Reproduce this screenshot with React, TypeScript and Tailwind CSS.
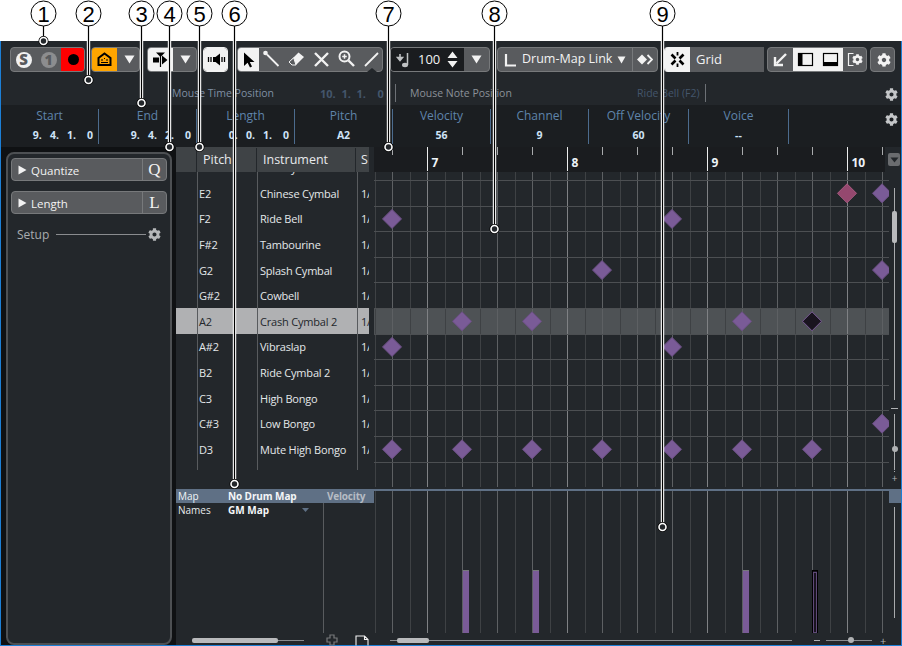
import React from 'react';
import { FaCog } from 'react-icons/fa';

const rowH = 25.6;
const gridW = 515;
const rows = [
  { pitch: 'D#2', name: 'Ride Cymbal 1' },
  { pitch: 'E2', name: 'Chinese Cymbal' },
  { pitch: 'F2', name: 'Ride Bell' },
  { pitch: 'F#2', name: 'Tambourine' },
  { pitch: 'G2', name: 'Splash Cymbal' },
  { pitch: 'G#2', name: 'Cowbell' },
  { pitch: 'A2', name: 'Crash Cymbal 2', active: true },
  { pitch: 'A#2', name: 'Vibraslap' },
  { pitch: 'B2', name: 'Ride Cymbal 2' },
  { pitch: 'C3', name: 'High Bongo' },
  { pitch: 'C#3', name: 'Low Bongo' },
  { pitch: 'D3', name: 'Mute High Bongo' },
];

// note centres, in page x, by row index below the E2 row
const notes: { row: number; x: number; kind?: 'pink' | 'sel' }[] = [
  { row: 0, x: 847, kind: 'pink' },
  { row: 0, x: 882 },
  { row: 1, x: 392 },
  { row: 1, x: 672 },
  { row: 3, x: 602 },
  { row: 3, x: 882 },
  { row: 5, x: 462 },
  { row: 5, x: 532 },
  { row: 5, x: 742 },
  { row: 5, x: 812, kind: 'sel' },
  { row: 6, x: 392 },
  { row: 6, x: 672 },
  { row: 9, x: 882 },
  { row: 10, x: 392 },
  { row: 10, x: 462 },
  { row: 10, x: 532 },
  { row: 10, x: 602 },
  { row: 10, x: 672 },
  { row: 10, x: 742 },
  { row: 10, x: 812 },
];

const subLines = Array.from({ length: 15 }, (_, i) => 375 + i * 35 - 374 + 0.5);
const beatLines = Array.from({ length: 15 }, (_, i) => 392 + i * 35 - 374 + 0.5);
const barLines = [427, 567, 707, 847].map(x => x - 374 + 0.5);

const callouts = [
  { n: 1, x: 43, endX: 43, endY: 41 },
  { n: 2, x: 88, endX: 88, endY: 80 },
  { n: 3, x: 141, endX: 141, endY: 103 },
  { n: 4, x: 169, endX: 169, endY: 147 },
  { n: 5, x: 199, endX: 199, endY: 147 },
  { n: 6, x: 234, endX: 234, endY: 484 },
  { n: 7, x: 388, endX: 388, endY: 147 },
  { n: 8, x: 494, endX: 494, endY: 229 },
  { n: 9, x: 662, endX: 662, endY: 527 },
];

const inspector = [
  { label: 'Start', value: '9.   4.   1.    0', w: 'w-[98px]', time: true },
  { label: 'End', value: '9.   4.   2.    0', w: 'w-[98px]', time: true },
  { label: 'Length', value: '0.   0.   1.    0', w: 'w-[98px]', time: true },
  { label: 'Pitch', value: 'A2', w: 'w-[98px]' },
  { label: 'Velocity', value: '56', w: 'w-[98px]' },
  { label: 'Channel', value: '9', w: 'w-[98px]' },
  { label: 'Off Velocity', value: '60', w: 'w-[100px]' },
  { label: 'Voice', value: '--', w: 'w-[100px]' },
];

const Group = ({ className = '', children }: { className?: string; children: React.ReactNode }) => (
  <div className={`flex h-[25px] shrink-0 overflow-hidden rounded-[4px] border border-[#77797b] bg-[#595b5e] ${className}`}>
    {children}
  </div>
);

const Cell = ({ className = '', children }: { className?: string; children?: React.ReactNode }) => (
  <div className={`flex h-full w-[25px] shrink-0 items-center justify-center ${className}`}>{children}</div>
);

const Down = () => (
  <svg width="11" height="9" viewBox="0 0 11 9"><path d="M0.5 0.5H10.5L5.5 8.5Z" fill="#f2f2f2" /></svg>
);

const Icon = ({ children }: { children: React.ReactNode }) => (
  <svg width="25" height="25" viewBox="0 0 25 25" fill="none">{children}</svg>
);

const Diamond = ({ x, y, kind }: { x: number; y: number; kind?: 'pink' | 'sel' }) => {
  const r = 9.5;
  const fill = kind === 'pink' ? '#95486f' : kind === 'sel' ? '#19141f' : '#7a5b97';
  const stroke = kind === 'sel' ? '#7a5b97' : kind === 'pink' ? '#a85a80' : '#6c5085';
  return (
    <path d={`M${x} ${y - r}L${x + r} ${y}L${x} ${y + r}L${x - r} ${y}Z`} fill={fill} stroke={stroke} strokeWidth="1" />
  );
};

const NoteGrid = () => (
  <svg width={gridW} height="317" className="block">
    <rect x="0" y={8 + rowH * 5 + 1} width={gridW} height="25" fill="#4e5255" />
    {subLines.map(x => <line key={x} x1={x} x2={x} y1="0" y2="315" stroke="#3e4144" />)}
    {beatLines.map(x => <line key={x} x1={x} x2={x} y1="0" y2="315" stroke="#5d6063" />)}
    {barLines.map(x => <line key={x} x1={x} x2={x} y1="0" y2="315" stroke="#7f8184" />)}
    {Array.from({ length: 12 }, (_, i) => {
      const y = Math.round(8 + rowH * i) + 0.5;
      return <line key={i} x1="0" x2={gridW} y1={y} y2={y} stroke="#4c4f52" />;
    })}
    {notes.map(n => (
      <Diamond key={`${n.row}-${n.x}`} x={n.x - 374} y={8 + rowH * n.row + rowH / 2 + 0.5} kind={n.kind} />
    ))}
  </svg>
);

const VelocityLane = () => (
  <svg width={gridW} height="142" className="block">
    {subLines.map(x => <line key={x} x1={x} x2={x} y1="0" y2="142" stroke="#3e4144" />)}
    {beatLines.map(x => <line key={x} x1={x} x2={x} y1="0" y2="142" stroke="#5d6063" />)}
    {barLines.map(x => <line key={x} x1={x} x2={x} y1="0" y2="142" stroke="#7f8184" />)}
    {[462, 532, 742].map(x => (
      <rect key={x} x={x - 374 + 1} y="79" width="6" height="63" fill="#7a5b97" stroke="none" />
    ))}
    {[462, 532, 742].map(x => (
      <rect key={x} x={x - 374 + 1} y="79" width="6" height="1" fill="#77797b" />
    ))}
    <rect x="438.5" y="79.5" width="5" height="62" fill="#19141f" stroke="#000" />
    <rect x="439.5" y="81.5" width="3" height="60" fill="#19141f" stroke="#5f4a78" />
  </svg>
);

const Ruler = () => (
  <svg width="511" height="25" className="block bg-[#1a1c1f]">
    {beatLines.filter(x => x < 511).map(x => <line key={x} x1={x} x2={x} y1="0" y2="8" stroke="#a8aaac" />)}
    {barLines.map(x => <line key={x} x1={x} x2={x} y1="0" y2="24" stroke="#eceded" />)}
    {['7', '8', '9', '10'].map((t, i) => (
      <text key={t} x={barLines[i] + 4} y="20" fill="#eef3f8" fontSize="12" fontWeight="700">{t}</text>
    ))}
  </svg>
);

const Callouts = () => (
  <svg width="902" height="646" className="absolute left-0 top-0 pointer-events-none">
    {callouts.map(c => (
      <g key={c.n}>
        <line x1={c.x + 0.5} x2={c.endX + 0.5} y1="26" y2={c.endY} stroke="#fff" strokeWidth="3.4" />
        <line x1={c.x + 0.5} x2={c.endX + 0.5} y1="26" y2={c.endY} stroke="#000" strokeWidth="1.2" />
        <circle cx={c.endX + 0.5} cy={c.endY} r="3.5" fill="#23272b" stroke="#000" strokeWidth="3" />
        <circle cx={c.endX + 0.5} cy={c.endY} r="3.5" fill="#23272b" stroke="#fff" strokeWidth="1.6" />
        <circle cx={c.x + 0.5} cy="13.5" r="12.5" fill="#fff" stroke="#000" strokeWidth="1" />
        <text x={c.x + 0.5} y="21.5" textAnchor="middle" fontSize="22" fill="#000" fontFamily="'Liberation Sans', sans-serif">{c.n}</text>
      </g>
    ))}
  </svg>
);

const TopToolbar = () => (
  <div className="flex h-[40px] items-start pl-[9px] pt-[6px]">
    <Group className="w-[75px]">
      <Cell>
        <span className="flex h-[16px] w-[16px] items-center justify-center rounded-full bg-[#f2f2f2] text-[15px] font-extrabold leading-none text-[#595b5e]">S</span>
      </Cell>
      <Cell>
        <span className="flex h-[16px] w-[16px] items-center justify-center rounded-full bg-[#8c8d8f] text-[14px] font-extrabold leading-none text-[#595b5e]">1</span>
      </Cell>
      <Cell className="bg-[#ff0000]">
        <span className="h-[11px] w-[11px] rounded-full bg-black" />
      </Cell>
    </Group>
    <Group className="ml-[6px] w-[49px]">
      <Cell className="bg-[#ffa500]">
        <Icon>
          <path d="M12.5 6.5L18.5 11V18H6.5V11Z" stroke="#000" strokeWidth="2" fill="none" />
          <path d="M9 13h2M12 11.5h1M14 13h2M9 15.5h7" stroke="#000" strokeWidth="1.2" />
        </Icon>
      </Cell>
      <Cell><Down /></Cell>
    </Group>
    <Group className="ml-[7px] w-[50px]">
      <Cell className="bg-[#f2f2f2]">
        <Icon>
          <path d="M8 5.5h9L12.5 10Z" fill="#000" />
          <path d="M12.5 9V20" stroke="#000" strokeWidth="1.2" />
          <rect x="5" y="10.5" width="6" height="5" fill="#000" />
          <path d="M14 8.5L19.5 13L14 17.5Z" fill="#000" />
        </Icon>
      </Cell>
      <Cell><Down /></Cell>
    </Group>
    <Group className="ml-[6px] w-[25px] border-[#f2f2f2]">
      <Cell className="bg-[#f2f2f2]">
        <Icon>
          <path d="M4.5 10v5M7 10v5M18 10v5M20.5 10v5" stroke="#000" strokeWidth="1.3" />
          <rect x="9" y="10" width="3" height="5" fill="#000" />
          <path d="M11.5 10L16 6.5V18.5L11.5 15Z" fill="#000" />
        </Icon>
      </Cell>
    </Group>
    <div className="relative ml-[9px] shrink-0">
      <Group className="w-[146px]">
        <div className="flex h-full w-[21px] shrink-0 items-center justify-center bg-[#f2f2f2]">
          <svg width="16" height="18" viewBox="0 0 16 18"><path d="M3 1.5V15L6.6 11.7L9 16.5L11 15.5L8.8 11H13.5Z" fill="#000" /></svg>
        </div>
        <Cell>
          <Icon>
            <circle cx="6.5" cy="6" r="2.3" fill="#f2f2f2" />
            <path d="M8 7.5L19.5 19" stroke="#f2f2f2" strokeWidth="1.8" />
          </Icon>
        </Cell>
        <Cell>
          <Icon>
            <path d="M14.5 5.5L20 10L12 18H8L5 15Z" fill="#f2f2f2" />
            <path d="M5 15L8 18H12L9.7 10.8Z" fill="#595b5e" stroke="#f2f2f2" strokeWidth="1" />
          </Icon>
        </Cell>
        <Cell>
          <Icon>
            <path d="M6 6L19 19M19 6L6 19" stroke="#f2f2f2" strokeWidth="2.4" />
          </Icon>
        </Cell>
        <Cell>
          <Icon>
            <circle cx="10.5" cy="9.5" r="5" stroke="#f2f2f2" strokeWidth="2" />
            <path d="M10.5 7.2v4.6M8.2 9.5h4.6" stroke="#f2f2f2" strokeWidth="1.5" />
            <path d="M14.5 13.5L20 19" stroke="#f2f2f2" strokeWidth="2.4" />
          </Icon>
        </Cell>
        <Cell>
          <Icon>
            <path d="M19 6L6 19" stroke="#f2f2f2" strokeWidth="1.8" />
          </Icon>
        </Cell>
      </Group>
      <span className="absolute bottom-0 right-[6px] h-0 w-0 border-x-[5px] border-b-[4px] border-x-transparent border-b-[#23272b]" />
    </div>
    <Group className="ml-[7px] w-[100px]">
      <div className="flex h-full w-[75px] items-center bg-[#1a1c1f]">
        <svg width="24" height="23" viewBox="0 0 24 23" fill="none">
          <path d="M9 6v4M6.5 9.5L9 12.5L11.5 9.5Z" stroke="#bfc1c3" strokeWidth="1.6" fill="#bfc1c3" />
          <path d="M16.5 5V17" stroke="#bfc1c3" strokeWidth="1.5" />
          <ellipse cx="14" cy="17" rx="3" ry="2.2" fill="#bfc1c3" />
        </svg>
        <span className="ml-[3px] w-[24px] text-[13px] leading-none text-[#f2f2f2]">100</span>
        <svg className="ml-[5px]" width="11" height="17" viewBox="0 0 11 17"><path d="M5.5 0.5L10.5 7H0.5ZM5.5 16.5L0.5 10H10.5Z" fill="#f2f2f2" /></svg>
      </div>
      <Cell><Down /></Cell>
    </Group>
    <Group className="ml-[7px] w-[161px]">
      <div className="flex h-full w-[135px] items-center border-r border-[#77797b]">
        <svg className="ml-[5px]" width="14" height="16" viewBox="0 0 14 16"><path d="M3 2V13.5H13" stroke="#f2f2f2" strokeWidth="2.2" fill="none" /></svg>
        <span className="ml-[5px] whitespace-nowrap text-[12.5px] leading-none text-[#f2f2f2]">Drum-Map Link</span>
        <svg className="ml-[5px]" width="9" height="8" viewBox="0 0 9 8"><path d="M0.5 0.5H8.5L4.5 7.5Z" fill="#f2f2f2" /></svg>
      </div>
      <div className="flex h-full flex-1 items-center justify-center">
        <svg width="16" height="11" viewBox="0 0 16 11">
          <path d="M5 0.5L10 5.5L5 10.5L0 5.5Z" fill="#f2f2f2" />
          <path d="M10.5 1L15 5.5L10.5 10" stroke="#f2f2f2" strokeWidth="1.8" fill="none" />
        </svg>
      </div>
    </Group>
    <Group className="ml-[6px] w-[100px] rounded-r-none border-y-0 border-r-0 border-[#f2f2f2]">
      <Cell className="bg-[#f2f2f2]">
        <Icon>
          <path d="M12.5 5v3.5M12.5 16.5v3.5" stroke="#000" strokeWidth="1.8" />
          <path d="M6.5 7.5L10.5 11.5M18.5 7.5L14.5 11.5M6.5 17.5L10.5 13.5M18.5 17.5L14.5 13.5" stroke="#000" strokeWidth="2.6" />
        </Icon>
      </Cell>
      <div className="flex h-full flex-1 items-center pl-[6px] text-[13px] leading-none text-[#f2f2f2]">Grid</div>
    </Group>
    <Group className="ml-[3px] w-[100px]">
      <Cell>
        <Icon>
          <path d="M18 7L8.5 16.5" stroke="#f2f2f2" strokeWidth="2.4" />
          <path d="M7 10V18H15" stroke="#f2f2f2" strokeWidth="2.4" fill="none" />
        </Icon>
      </Cell>
      <Cell className="bg-[#f2f2f2]">
        <Icon>
          <rect x="5.5" y="6.5" width="14" height="12" stroke="#000" strokeWidth="1.2" />
          <rect x="6" y="7" width="3.5" height="11" fill="#000" />
        </Icon>
      </Cell>
      <Cell className="bg-[#f2f2f2]">
        <Icon>
          <rect x="5.5" y="6.5" width="14" height="12" stroke="#000" strokeWidth="1.2" />
          <rect x="6" y="15" width="13" height="3.5" fill="#000" />
        </Icon>
      </Cell>
      <Cell className="relative">
        <Icon>
          <path d="M10.5 6.5H5.5V18.5H10.5" stroke="#f2f2f2" strokeWidth="1.2" />
        </Icon>
        <FaCog className="absolute left-[9px] top-[6px] text-[11px] text-[#f2f2f2]" />
      </Cell>
    </Group>
    <Group className="ml-[3px] w-[25px]">
      <Cell><FaCog className="text-[14px] text-[#f2f2f2]" /></Cell>
    </Group>
  </div>
);

const InfoLine = () => (
  <div className="flex h-[24px] items-center text-[10.5px] leading-none">
    <span className="ml-[171px] w-[148px] text-[#7f8fa3]">Mouse Time Position</span>
    <span className="w-[75px] whitespace-pre text-[11px] font-bold text-[#44566b]">10.  1.  1.    0</span>
    <span className="h-[18px] w-px bg-[#6d7176]" />
    <span className="ml-[14px] w-[227px] text-[#8b9198]">Mouse Note Position</span>
    <span className="w-[68px] whitespace-nowrap text-[#44566b]">Ride Bell (F2)</span>
    <span className="h-[18px] w-px bg-[#6d7176]" />
    <FaCog className="ml-[179px] mt-[2px] text-[13px] text-[#c4c6c8]" />
  </div>
);

const InspectorBar = () => (
  <div className="flex h-[42px] items-center bg-[#1b1e21]">
    {inspector.map(c => (
      <div key={c.label} className={`flex h-[35px] flex-col items-center gap-[5px] border-r border-[#4c6c8e] ${c.w}`}>
        <span className="text-[12px] leading-[14px] text-[#5f84ab]">{c.label}</span>
        <span className={`whitespace-pre text-[10.5px] font-bold leading-[14px] text-[#cfe3f7] ${c.time ? 'self-end pr-[5px]' : ''}`}>{c.value}</span>
      </div>
    ))}
    <FaCog className="ml-[96px] mb-[14px] text-[13px] text-[#c4c6c8]" />
  </div>
);

const SectionButton = ({ label, letter, className = '' }: { label: string; letter: string; className?: string }) => (
  <div className={`flex h-[23px] items-center rounded-[4px] border border-[#77797b] bg-[#595b5e] ${className}`}>
    <svg className="ml-[6px]" width="9" height="10" viewBox="0 0 9 10"><path d="M0.5 0.5L8.5 5L0.5 9.5Z" fill="#f2f2f2" /></svg>
    <span className="ml-[4px] flex-1 pt-[2px] text-[11.5px] leading-none text-[#f2f2f2]">{label}</span>
    <span className="flex h-full w-[24px] items-center justify-center border-l border-[#77797b] font-['Liberation_Serif',serif] text-[17px] leading-none text-[#f2f2f2]">{letter}</span>
  </div>
);

const LeftZone = () => (
  <div className="ml-[5px] mt-[5px] h-[493px] w-[166px] shrink-0 rounded-[8px] border-2 border-[#4d5053] bg-[#23272b] px-[3px] pt-[4px]">
    <SectionButton label="Quantize" letter="Q" />
    <SectionButton label="Length" letter="L" className="mt-[10px]" />
    <div className="mt-[13px] flex items-center pl-[6px]">
      <span className="w-[39px] pt-[2px] text-[12px] leading-none text-[#a9acaf]">Setup</span>
      <span className="h-px w-[90px] bg-[#8a8c8f]" />
      <FaCog className="ml-[2px] text-[13px] text-[#b5b7b9]" />
    </div>
  </div>
);

const DrumList = () => (
  <div className="w-[198px] shrink-0 bg-[#23272b]">
    <div className="flex h-[25px] w-[193px] items-center bg-[#3f4346] pt-px text-[12.5px] leading-none text-[#e8eaec]">
      <div className="h-full w-[21px] border-r border-[#23272b]" />
      <div className="flex h-full w-[60px] items-center border-r border-[#23272b] pl-[6px]">Pitch</div>
      <div className="flex h-full w-[99px] items-center border-r border-[#23272b] pl-[6px]">Instrument</div>
      <div className="w-[12px] overflow-hidden pl-[5px]">S</div>
    </div>
    <div className="relative h-[315px] w-[193px] overflow-hidden">
      <div className="-mt-[17.6px]">
        {rows.map(r => (
          <div
            key={r.pitch}
            className={`flex h-[25.6px] items-center pt-px text-[11px] leading-none tracking-[-0.2px] ${r.active ? 'bg-[#b0b1b3] text-[#23272b]' : 'text-[#e4e7ea]'}`}
          >
            <span className="ml-[23px] w-[61px]">{r.pitch}</span>
            <span className="w-[101px] whitespace-nowrap">{r.name}</span>
            <span className="w-[8px] overflow-hidden">1/</span>
          </div>
        ))}
      </div>
      <span className="absolute left-[21px] top-0 h-[298px] w-px bg-[#585b5e]" />
      <span className="absolute left-[81px] top-0 h-[298px] w-px bg-[#585b5e]" />
      <span className="absolute left-[181px] top-0 h-[298px] w-px bg-[#585b5e]" />
    </div>
    <div className="h-[2px]" />
  </div>
);

const RightScroll = () => (
  <div className="flex w-[12px] shrink-0 flex-col items-center bg-[#23272b]">
    <div className="-ml-[2px] mt-[6px] flex h-[13px] w-[12px] items-center justify-center rounded-[2px] bg-[#6a6c6f]">
      <svg width="9" height="6" viewBox="0 0 9 6"><path d="M0.5 0.5H8.5L4.5 5.5Z" fill="#23272b" /></svg>
    </div>
    <div className="relative ml-[-1px] mt-[22px] h-[212px] w-px bg-[#a8aaac]">
      <span className="absolute left-[-2px] top-[23px] h-[32px] w-[5px] rounded-[2px] bg-[#b9babc]" />
    </div>
    <span className="ml-[-1px] mt-[8px] h-px w-[7px] bg-[#b0b2b4]" />
    <div className="relative ml-[-1px] mt-[5px] h-[56px] w-px bg-[#a8aaac]">
      <span className="absolute left-[-2.5px] top-[32px] h-[6px] w-[6px] rounded-full bg-[#b0b2b4]" />
    </div>
    <span className="ml-[-1px] mt-[1px] h-px w-px bg-[#a8aaac]" />
    <span className="ml-[-1px] mt-[1px] text-[10px] leading-[10px] text-[#b0b2b4]">+</span>
  </div>
);

const LowerLeft = () => (
  <div className="flex w-[198px] shrink-0 flex-col bg-[#23272b]">
    <div className="flex h-[14px] items-center bg-[#5f7085] text-[10px] leading-none">
      <span className="ml-[2px] w-[50px] text-[#f0f3f6]">Map</span>
      <span className="w-[99px] font-bold tracking-[-0.1px] text-[#f4f6f8]">No Drum Map</span>
      <span className="font-bold tracking-[-0.2px] text-[#b6bcc4]">Velocity</span>
    </div>
    <div className="flex flex-1">
      <div className="flex h-full w-[148px] items-start border-r border-[#585b5e] pt-[2px] text-[10px] leading-[11px]">
        <span className="ml-[2px] w-[50px] text-[#e8eaec]">Names</span>
        <span className="font-bold text-[#f4f6f8]">GM Map</span>
        <svg className="ml-[33px] mt-[3px]" width="7" height="4" viewBox="0 0 7 4"><path d="M0 0H7L3.5 4Z" fill="#5f7085" /></svg>
      </div>
    </div>
  </div>
);

const LowerScroll = () => (
  <div className="flex w-[12px] shrink-0 flex-col items-center bg-[#23272b]">
    <span className="h-[14px] w-full bg-[#5f7085]" />
    <span className="ml-[-1px] mt-[4px] h-[111px] w-px bg-[#a8aaac]" />
  </div>
);

const BottomBar = () => (
  <div className="flex h-[12px] items-center bg-[#23272b] pt-[2px]">
    <div className="relative ml-[16px] h-px w-[112px] bg-[#8a8c8f]">
      <span className="absolute left-0 top-[-2px] h-[5px] w-[86px] rounded-[2px] bg-[#b9babc]" />
    </div>
    <svg className="ml-[22px]" width="12" height="12" viewBox="0 0 12 12" fill="none">
      <path d="M4 1H8V4H11V8H8V11H4V8H1V4H4Z" stroke="#77797b" strokeWidth="1.2" />
    </svg>
    <svg className="ml-[17px]" width="14" height="11" viewBox="0 0 14 11" fill="none">
      <path d="M1 10.5V1H9.5L13 4.5V10.5M9.5 1V4.5H13" stroke="#f2f2f2" strokeWidth="1.1" />
    </svg>
    <div className="relative ml-[21px] h-px w-[402px] bg-[#8a8c8f]">
      <span className="absolute left-[7px] top-[-2px] h-[5px] w-[32px] rounded-[2px] bg-[#b9babc]" />
    </div>
    <span className="ml-[22px] h-px w-[6px] bg-[#b0b2b4]" />
    <div className="relative ml-[6px] h-px w-[46px] bg-[#8a8c8f]">
      <span className="absolute left-[22px] top-[-2.5px] h-[6px] w-[6px] rounded-full bg-[#b0b2b4]" />
    </div>
    <span className="ml-[8px] text-[11px] leading-none text-[#b0b2b4]">+</span>
  </div>
);

export default function App() {
  return (
    <div className="relative h-[646px] w-[902px] overflow-hidden bg-white font-['Open_Sans',sans-serif]">
      <div className="h-[41px]" />
      <div className="flex h-[605px] flex-col border-x border-b border-x-[#1c7fd6] border-b-[#1c7fd6] bg-[#0f1113]">
        <div className="bg-[#23272b]">
          <TopToolbar />
          <InfoLine />
        </div>
        <InspectorBar />
        <div className="flex flex-1">
          <LeftZone />
          <div className="ml-[4px] flex min-w-0 flex-1 flex-col bg-[#23272b]">
            <div className="flex h-[342px]">
              <DrumList />
              <div className="w-[515px] shrink-0">
                <Ruler />
                <NoteGrid />
              </div>
              <RightScroll />
            </div>
            <div className="flex h-[144px]">
              <LowerLeft />
              <div className="w-[515px] shrink-0">
                <div className="h-[2px] bg-[#5f7085]" />
                <VelocityLane />
              </div>
              <LowerScroll />
            </div>
            <BottomBar />
          </div>
        </div>
      </div>
      <Callouts />
    </div>
  );
}
